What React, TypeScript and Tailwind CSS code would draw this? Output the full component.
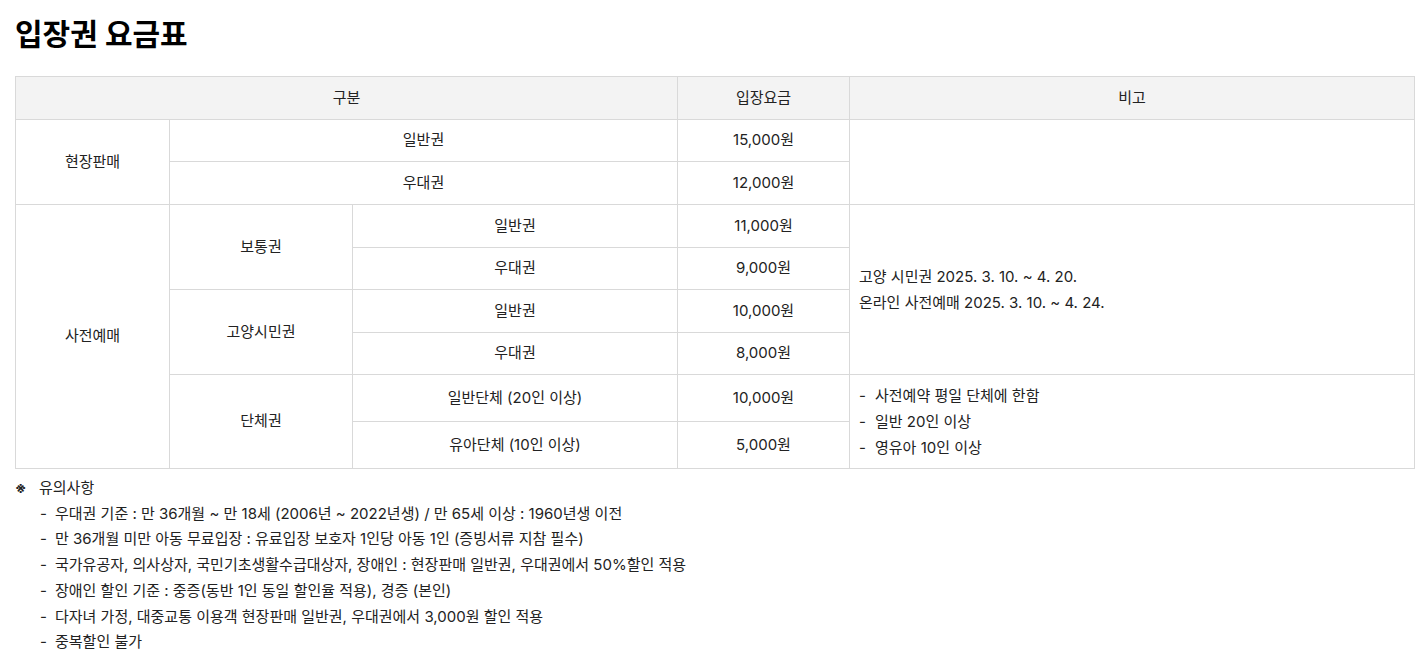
import React from "react";

const cell = "border border-[#d9d9d9] text-center align-middle";

export default function App() {
  return (
    <div
      className="bg-white text-[#222] text-[15px] min-h-[668px] pl-[15px] pt-[14px]"
      style={{ fontFamily: 'Inter, "Noto Sans CJK KR", "Noto Sans", sans-serif' }}
    >
      <h1 className="text-[30px] leading-[40px] font-bold text-black">입장권 요금표</h1>
      <table className="mt-[22px] w-[1400px] table-fixed border-collapse">
        <colgroup>
          <col className="w-[154px]" />
          <col className="w-[183px]" />
          <col className="w-[325px]" />
          <col className="w-[172px]" />
          <col />
        </colgroup>
        <thead>
          <tr className="h-[43px] bg-[#f3f3f3]">
            <th colSpan={3} className={`${cell} font-normal`}>구분</th>
            <th className={`${cell} font-normal`}>입장요금</th>
            <th className={`${cell} font-normal`}>비고</th>
          </tr>
        </thead>
        <tbody>
          <tr className="h-[42px]">
            <td rowSpan={2} className={cell}>현장판매</td>
            <td colSpan={2} className={cell}>일반권</td>
            <td className={cell}>15,000원</td>
            <td rowSpan={2} className={cell}></td>
          </tr>
          <tr className="h-[43px]">
            <td colSpan={2} className={cell}>우대권</td>
            <td className={cell}>12,000원</td>
          </tr>
          <tr className="h-[43px]">
            <td rowSpan={6} className={cell}>사전예매</td>
            <td rowSpan={2} className={cell}>보통권</td>
            <td className={cell}>일반권</td>
            <td className={cell}>11,000원</td>
            <td rowSpan={4} className={`${cell} !text-left pl-[9px] leading-[26px]`}>
              <p>고양 시민권 2025. 3. 10. ~ 4. 20.</p>
              <p>온라인 사전예매 2025. 3. 10. ~ 4. 24.</p>
            </td>
          </tr>
          <tr className="h-[42px]">
            <td className={cell}>우대권</td>
            <td className={cell}>9,000원</td>
          </tr>
          <tr className="h-[43px]">
            <td rowSpan={2} className={cell}>고양시민권</td>
            <td className={cell}>일반권</td>
            <td className={cell}>10,000원</td>
          </tr>
          <tr className="h-[42px]">
            <td className={cell}>우대권</td>
            <td className={cell}>8,000원</td>
          </tr>
          <tr className="h-[47px]">
            <td rowSpan={2} className={cell}>단체권</td>
            <td className={cell}>일반단체 (20인 이상)</td>
            <td className={cell}>10,000원</td>
            <td rowSpan={2} className={`${cell} !text-left pl-[9px] leading-[26px]`}>
              <p className="flex"><span className="w-[16px]">-</span>사전예약 평일 단체에 한함</p>
              <p className="flex"><span className="w-[16px]">-</span>일반 20인 이상</p>
              <p className="flex"><span className="w-[16px]">-</span>영유아 10인 이상</p>
            </td>
          </tr>
          <tr className="h-[47px]">
            <td className={cell}>유아단체 (10인 이상)</td>
            <td className={cell}>5,000원</td>
          </tr>
        </tbody>
      </table>
      <div className="mt-[6px] leading-[25.7px]">
        <p className="flex"><span className="w-[24px] text-[14px] font-bold">※</span>유의사항</p>
        <div className="pl-[25px]">
          {[
            "우대권 기준 : 만 36개월 ~ 만 18세 (2006년 ~ 2022년생) / 만 65세 이상 : 1960년생 이전",
            "만 36개월 미만 아동 무료입장 : 유료입장 보호자 1인당 아동 1인 (증빙서류 지참 필수)",
            "국가유공자, 의사상자, 국민기초생활수급대상자, 장애인 : 현장판매 일반권, 우대권에서 50%할인 적용",
            "장애인 할인 기준 : 중증(동반 1인 동일 할인율 적용), 경증 (본인)",
            "다자녀 가정, 대중교통 이용객 현장판매 일반권, 우대권에서 3,000원 할인 적용",
            "중복할인 불가",
          ].map((t) => (
            <p key={t} className="flex">
              <span className="w-[15px]">-</span>
              {t}
            </p>
          ))}
        </div>
      </div>
    </div>
  );
}
